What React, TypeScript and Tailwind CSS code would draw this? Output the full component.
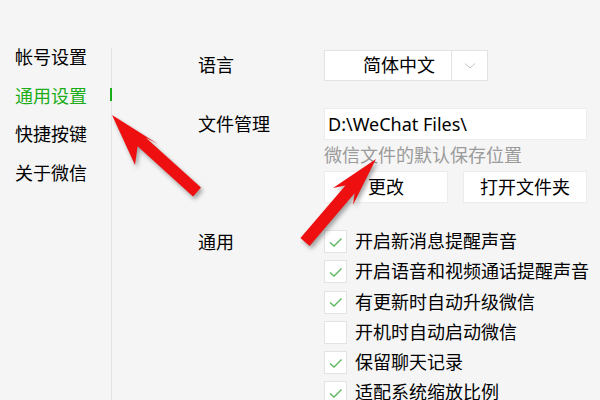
import React from 'react';

const FONT = { fontFamily: '"Noto Sans", "Noto Sans CJK SC", sans-serif' };

const menu = ['帐号设置', '通用设置', '快捷按键', '关于微信'];

const options = [
  { label: '开启新消息提醒声音', checked: true },
  { label: '开启语音和视频通话提醒声音', checked: true },
  { label: '有更新时自动升级微信', checked: true },
  { label: '开机时自动启动微信', checked: false },
  { label: '保留聊天记录', checked: true },
  { label: '适配系统缩放比例', checked: true },
];

function Checkbox({ checked }: { checked: boolean }) {
  return (
    <div className="w-[23px] h-[23px] bg-white border border-[#e3e3e3] flex items-center justify-center shrink-0">
      {checked && (
        <svg width="15" height="12" viewBox="0 0 15 12">
          <path d="M2 6.5 L6 10 L13.5 2.5" fill="none" stroke="#5cb85c" strokeWidth="1.4" />
        </svg>
      )}
    </div>
  );
}

// red annotation arrows drawn over the screenshot
function Arrows() {
  return (
    <svg
      className="absolute inset-0 pointer-events-none"
      width="600"
      height="400"
      style={{ filter: 'drop-shadow(2px 3px 2px rgba(0,0,0,0.35))' }}
    >
      <polygon
        fill="#ee1010"
        points="112,115 158,144 145.6,137.4 201,187.6 193,196.4 137.6,146.2 135,165"
        strokeLinejoin="round"
      />
      <polygon
        fill="#ee1010"
        points="376,159 353,205 354.6,193.3 309.6,245.9 300.4,238.1 345.4,185.5 333,188"
        strokeLinejoin="round"
      />
    </svg>
  );
}

export default function App() {
  return (
    <div className="relative w-[600px] h-[400px] overflow-hidden bg-[#f5f5f5] text-[18px] text-black flex" style={FONT}>
      {/* sidebar */}
      <div className="w-[111px] shrink-0 pt-[38px]">
        {menu.map((m, i) => (
          <div key={m} className={`pl-[15px] h-[38.5px] leading-[38px] ${i === 1 ? 'text-[#1aad19]' : ''}`}>
            {m}
          </div>
        ))}
      </div>
      <div className="relative w-px mt-[48px] bg-[#e2e2e2]">
        <div className="absolute left-[-1px] top-[40px] w-[2px] h-[13px] bg-[#1aad19]" />
      </div>

      {/* content */}
      <div className="flex-1 pl-[86px] pt-[50px]">
        <div className="flex items-center h-[31px]">
          <div className="w-[126px]">语言</div>
          <div className="flex h-[31px] w-[164px] bg-white border border-[#e3e3e3]">
            <div className="flex-1 pl-[38px] leading-[29px]">简体中文</div>
            <div className="w-[36px] border-l border-[#e3e3e3] flex items-center justify-center">
              <svg width="12" height="8" viewBox="0 0 12 8">
                <path d="M1 1.5 L6 6 L11 1.5" fill="none" stroke="#c4c4c4" strokeWidth="1" />
              </svg>
            </div>
          </div>
        </div>

        <div className="flex mt-[27px]">
          <div className="w-[126px] leading-[32px]">文件管理</div>
          <div className="flex flex-col">
            <div className="h-[32px] w-[263px] bg-white border border-[#ececec] pl-[3px] leading-[30px]">D:\WeChat Files\</div>
            <div className="text-[#9b9b9b] leading-[31px]">微信文件的默认保存位置</div>
            <div className="flex gap-[15px]">
              <div className="w-[124px] h-[32px] bg-white border border-[#ececec] flex items-center justify-center">更改</div>
              <div className="w-[124px] h-[32px] bg-white border border-[#ececec] flex items-center justify-center">打开文件夹</div>
            </div>
          </div>
        </div>

        <div className="flex mt-[27px]">
          <div className="w-[126px] leading-[24px]">通用</div>
          <div className="flex flex-col gap-[7.3px]">
            {options.map(o => (
              <div key={o.label} className="flex items-center gap-[8px] h-[23px]">
                <Checkbox checked={o.checked} />
                <span className="leading-[23px]">{o.label}</span>
              </div>
            ))}
          </div>
        </div>
      </div>

      <Arrows />
    </div>
  );
}
